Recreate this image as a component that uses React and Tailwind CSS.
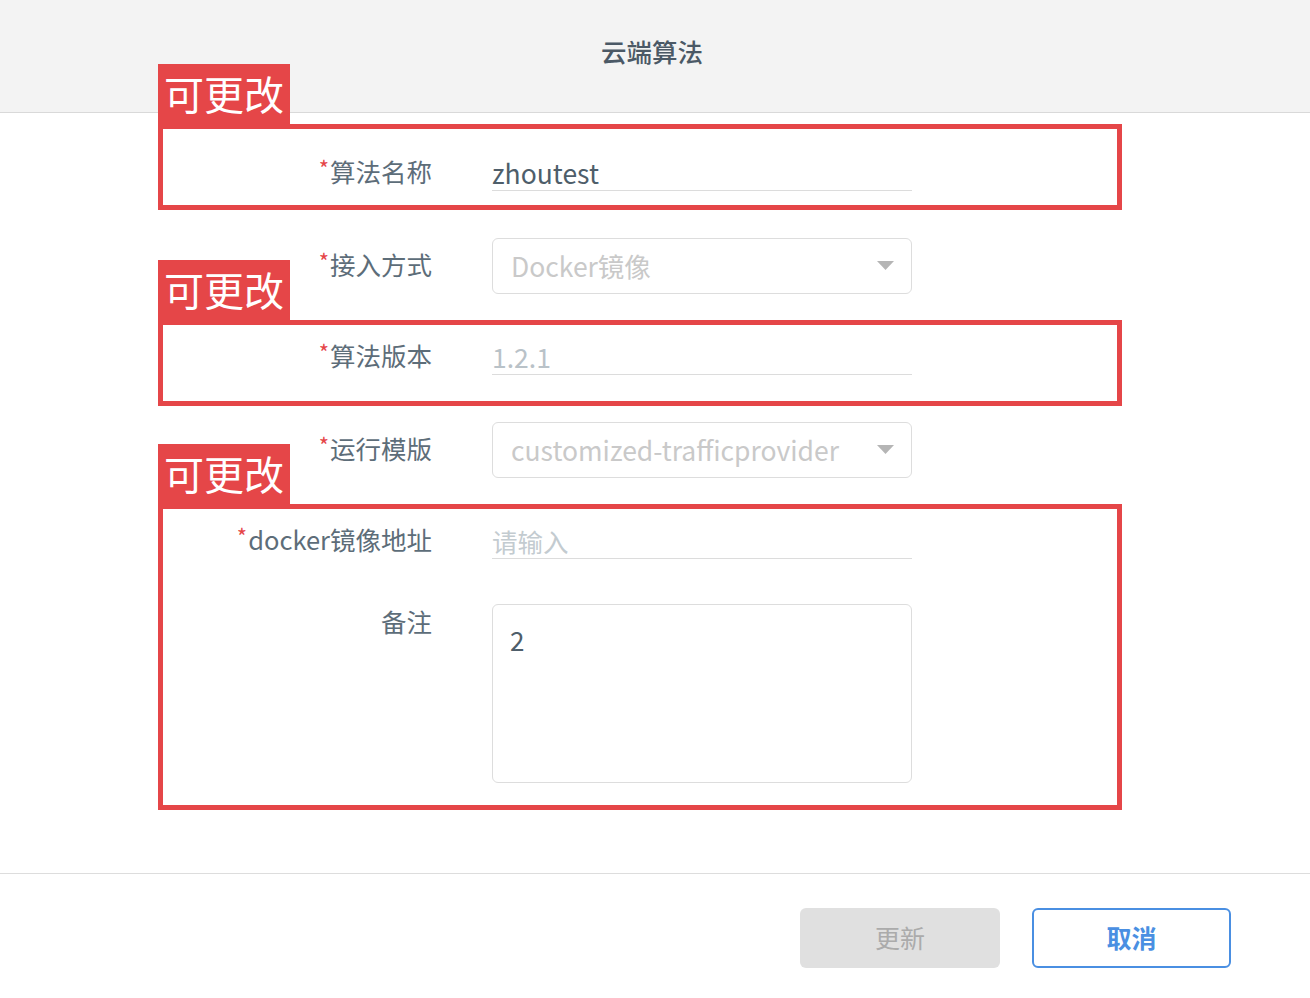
import React from "react";

const FONT = { fontFamily: '"Noto Sans CJK SC", "Noto Sans", sans-serif' };

/* ---- small pieces -------------------------------------------------------- */
function Tag() {
  return (
    <div className="absolute left-[-5px] bottom-[calc(100%+5px)] flex h-[60px] w-[132px] items-center justify-center bg-[#e54648] pb-[2px] text-[40px] leading-none text-white">
      可更改
    </div>
  );
}

function Label({ text, required = true }) {
  return (
    <div className="flex h-[36px] w-[269px] shrink-0 items-center justify-end pb-[3px] text-[25.5px] text-[#5d6d79]">
      {required && (
        <span className="mr-[1px] self-start pt-[1px] text-[22px] leading-none text-[#e54648]">
          *
        </span>
      )}
      {text}
    </div>
  );
}

function LineInput({ value, placeholder, muted }) {
  return (
    <div className="ml-[60px] flex h-[36px] w-[420px] items-center border-b border-[#dcdcdc] pt-[1px] text-[26.5px]">
      {value ? (
        <span className={muted ? "text-[#b9c2c8]" : "text-[#4e5e6a]"}>{value}</span>
      ) : (
        <span className="text-[25.5px] text-[#c3cbd0]">{placeholder}</span>
      )}
    </div>
  );
}

function Select({ value }) {
  return (
    <div className="ml-[60px] flex h-[56px] w-[420px] items-center justify-between rounded-[6px] border border-[#dddddd] pb-[1px] pl-[18px] pr-[17px] text-[26.5px] text-[#c9c9c9]">
      <span>{value}</span>
      <svg width="17" height="9" viewBox="0 0 17 9">
        <path d="M0 0h17L8.5 9z" fill="#b5b5b5" />
      </svg>
    </div>
  );
}

/* ---- page ---------------------------------------------------------------- */
export default function App() {
  return (
    <div className="min-h-[998px] w-[1310px] bg-white" style={FONT}>
      <div className="flex h-[113px] items-center justify-center border-b border-[#d9d9d9] bg-[#f3f3f3] pr-[6px] pb-[10px] text-[25.5px] font-medium text-[#4b5966]">
        云端算法
      </div>

      <div className="ml-[158px] w-[964px]">
        {/* 算法名称 */}
        <div className="relative mt-[11px] border-[5px] border-[#e54648] pt-[26px] pb-[14px]">
          <Tag />
          <div className="flex items-center">
            <Label text="算法名称" />
            <LineInput value="zhoutest" />
          </div>
        </div>

        {/* 接入方式 */}
        <div className="mt-[28px] mb-[26px] flex items-center px-[5px]">
          <Label text="接入方式" />
          <Select value="Docker镜像" />
        </div>

        {/* 算法版本 */}
        <div className="relative border-[5px] border-[#e54648] pt-[14px] pb-[26px]">
          <Tag />
          <div className="flex items-center">
            <Label text="算法版本" />
            <LineInput value="1.2.1" muted />
          </div>
        </div>

        {/* 运行模版 */}
        <div className="mt-[16px] mb-[26px] flex items-center px-[5px]">
          <Label text="运行模版" />
          <Select value="customized-trafficprovider" />
        </div>

        {/* docker镜像地址 + 备注 */}
        <div className="relative border-[5px] border-[#e54648] pt-[14px] pb-[22px]">
          <Tag />
          <div className="flex items-center">
            <Label text="docker镜像地址" />
            <LineInput placeholder="请输入" />
          </div>
          <div className="mt-[45px] flex items-start">
            <div className="mt-[1px]">
              <Label text="备注" required={false} />
            </div>
            <div className="ml-[60px] h-[179px] w-[420px] rounded-[6px] border border-[#dddddd] px-[17px] pt-[22px] text-[26px] leading-none text-[#4e5e6a]">
              2
            </div>
          </div>
        </div>
      </div>

      {/* footer */}
      <div className="mt-[63px] border-t border-[#dddddd] pt-[34px]">
        <div className="flex justify-end gap-[32px] pr-[79px]">
          <button
            type="button"
            className="h-[60px] w-[200px] rounded-[6px] bg-[#e0e0e0] text-[25px] text-[#ababab]"
          >
            更新
          </button>
          <button
            type="button"
            className="h-[60px] w-[199px] rounded-[6px] border-2 border-[#4a8fe2] bg-white text-[25px] font-bold text-[#4a8fe2]"
          >
            取消
          </button>
        </div>
      </div>
    </div>
  );
}
